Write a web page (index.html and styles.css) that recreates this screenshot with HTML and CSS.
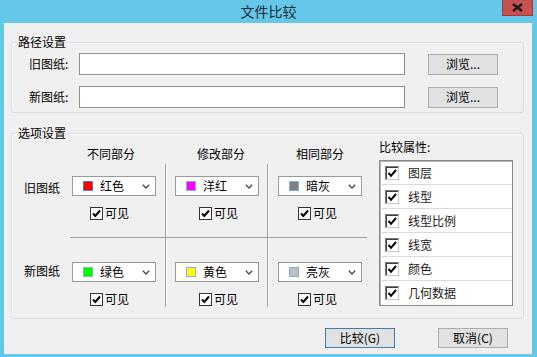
FILE: index.html
```html
<!DOCTYPE html>
<html lang="zh-CN">
<head>
<meta charset="utf-8">
<title>文件比较</title>
<link rel="stylesheet" href="styles.css">
</head>
<body>
<div class="window">
  <div class="titlebar">
    <span class="title">文件比较</span>
    <div class="close">
      <svg width="11" height="9" viewBox="0 0 11 9"><path d="M1 1 L10 8 M10 1 L1 8" stroke="#1a1a1a" stroke-width="2.4" fill="none"/></svg>
    </div>
  </div>
  <div class="client">
    <div class="group group-path">
      <span class="legend">路径设置</span>
      <div class="path-row">
        <span class="path-label">旧图纸:</span>
        <div class="textbox"></div>
        <button class="btn browse">浏览...</button>
      </div>
      <div class="path-row">
        <span class="path-label">新图纸:</span>
        <div class="textbox"></div>
        <button class="btn browse">浏览...</button>
      </div>
    </div>

    <div class="group group-options">
      <span class="legend">选项设置</span>
      <div class="matrix">
        <div class="hcell c0"></div>
        <div class="hcell c1"><span class="htext">不同部分</span></div>
        <div class="hcell c2"><span class="htext">修改部分</span></div>
        <div class="hcell c3"><span class="htext">相同部分</span></div>

        <div class="rlabel r1">旧图纸</div>
        <div class="cell r1 c1">
          <div class="combo"><span class="swatch sw-red"></span><span class="ctext">红色</span><svg class="chev" width="8" height="5" viewBox="0 0 8 5"><path d="M0.8 0.8 L4 4 L7.2 0.8" stroke="#444" stroke-width="1.3" fill="none"/></svg></div>
          <label class="check"><span class="box"><svg width="11" height="11" viewBox="0 0 11 11"><path d="M2 5.5 L4.3 8 L9 2.5" stroke="#000" stroke-width="2" fill="none"/></svg></span><span>可见</span></label>
        </div>
        <div class="cell r1 c2">
          <div class="combo"><span class="swatch sw-magenta"></span><span class="ctext">洋红</span><svg class="chev" width="8" height="5" viewBox="0 0 8 5"><path d="M0.8 0.8 L4 4 L7.2 0.8" stroke="#444" stroke-width="1.3" fill="none"/></svg></div>
          <label class="check"><span class="box"><svg width="11" height="11" viewBox="0 0 11 11"><path d="M2 5.5 L4.3 8 L9 2.5" stroke="#000" stroke-width="2" fill="none"/></svg></span><span>可见</span></label>
        </div>
        <div class="cell r1 c3">
          <div class="combo"><span class="swatch sw-dgray"></span><span class="ctext">暗灰</span><svg class="chev" width="8" height="5" viewBox="0 0 8 5"><path d="M0.8 0.8 L4 4 L7.2 0.8" stroke="#444" stroke-width="1.3" fill="none"/></svg></div>
          <label class="check"><span class="box"><svg width="11" height="11" viewBox="0 0 11 11"><path d="M2 5.5 L4.3 8 L9 2.5" stroke="#000" stroke-width="2" fill="none"/></svg></span><span>可见</span></label>
        </div>

        <div class="rlabel r2">新图纸</div>
        <div class="cell r2 c1">
          <div class="combo"><span class="swatch sw-green"></span><span class="ctext">绿色</span><svg class="chev" width="8" height="5" viewBox="0 0 8 5"><path d="M0.8 0.8 L4 4 L7.2 0.8" stroke="#444" stroke-width="1.3" fill="none"/></svg></div>
          <label class="check"><span class="box"><svg width="11" height="11" viewBox="0 0 11 11"><path d="M2 5.5 L4.3 8 L9 2.5" stroke="#000" stroke-width="2" fill="none"/></svg></span><span>可见</span></label>
        </div>
        <div class="cell r2 c2">
          <div class="combo"><span class="swatch sw-yellow"></span><span class="ctext">黄色</span><svg class="chev" width="8" height="5" viewBox="0 0 8 5"><path d="M0.8 0.8 L4 4 L7.2 0.8" stroke="#444" stroke-width="1.3" fill="none"/></svg></div>
          <label class="check"><span class="box"><svg width="11" height="11" viewBox="0 0 11 11"><path d="M2 5.5 L4.3 8 L9 2.5" stroke="#000" stroke-width="2" fill="none"/></svg></span><span>可见</span></label>
        </div>
        <div class="cell r2 c3">
          <div class="combo"><span class="swatch sw-lgray"></span><span class="ctext">亮灰</span><svg class="chev" width="8" height="5" viewBox="0 0 8 5"><path d="M0.8 0.8 L4 4 L7.2 0.8" stroke="#444" stroke-width="1.3" fill="none"/></svg></div>
          <label class="check"><span class="box"><svg width="11" height="11" viewBox="0 0 11 11"><path d="M2 5.5 L4.3 8 L9 2.5" stroke="#000" stroke-width="2" fill="none"/></svg></span><span>可见</span></label>
        </div>
      </div>

      <div class="attrs">
        <div class="attrs-title">比较属性:</div>
        <div class="listbox">
          <div class="lrow"><span class="lbox"><svg width="12" height="12" viewBox="0 0 12 12"><path d="M2.5 6 L5 8.8 L10 3" stroke="#000" stroke-width="2" fill="none"/></svg></span><span class="ltext">图层</span></div>
          <div class="lrow"><span class="lbox"><svg width="12" height="12" viewBox="0 0 12 12"><path d="M2.5 6 L5 8.8 L10 3" stroke="#000" stroke-width="2" fill="none"/></svg></span><span class="ltext">线型</span></div>
          <div class="lrow"><span class="lbox"><svg width="12" height="12" viewBox="0 0 12 12"><path d="M2.5 6 L5 8.8 L10 3" stroke="#000" stroke-width="2" fill="none"/></svg></span><span class="ltext">线型比例</span></div>
          <div class="lrow"><span class="lbox"><svg width="12" height="12" viewBox="0 0 12 12"><path d="M2.5 6 L5 8.8 L10 3" stroke="#000" stroke-width="2" fill="none"/></svg></span><span class="ltext">线宽</span></div>
          <div class="lrow"><span class="lbox"><svg width="12" height="12" viewBox="0 0 12 12"><path d="M2.5 6 L5 8.8 L10 3" stroke="#000" stroke-width="2" fill="none"/></svg></span><span class="ltext">颜色</span></div>
          <div class="lrow"><span class="lbox"><svg width="12" height="12" viewBox="0 0 12 12"><path d="M2.5 6 L5 8.8 L10 3" stroke="#000" stroke-width="2" fill="none"/></svg></span><span class="ltext">几何数据</span></div>
        </div>
      </div>
    </div>

    <div class="actions">
      <button class="btn action default">比较(G)</button>
      <button class="btn action">取消(C)</button>
    </div>
  </div>
</div>
</body>
</html>
```

FILE: styles.css
```css
* { box-sizing: border-box; }
html, body { margin: 0; padding: 0; }
body {
  font-family: "Noto Sans CJK SC", "Microsoft YaHei", sans-serif;
  font-size: 12px;
  color: #000;
  background: #65C8EA;
}
.window {
  width: 537px;
  height: 357px;
  background: #65C8EA;
  display: flex;
  flex-direction: column;
}
.titlebar {
  height: 23px;
  position: relative;
  display: flex;
  justify-content: center;
  align-items: center;
}
.title {
  font-size: 14px;
  line-height: 23px;
  color: #1c2b33;
}
.close {
  position: absolute;
  top: 0;
  left: 502px;
  width: 31px;
  height: 16px;
  background: #C75050;
  border: 1px solid #A23A3A;
  border-top: none;
  display: flex;
  align-items: center;
  justify-content: center;
}
.client {
  margin: 0 5px 0 4px;
  height: 331px;
  background: #F0F0F0;
  padding: 19px 8px 0 7px;
}
.group {
  position: relative;
  border: 1px solid #DCDCDC;
  border-radius: 3px;
  box-shadow: inset 1px 1px 0 #fff;
}
.legend {
  position: absolute;
  top: -9px;
  left: 5px;
  padding: 0 1px;
  line-height: 16px;
  background: #F0F0F0;
}
.group-path {
  height: 71px;
  padding-top: 10px;
}
.path-row {
  display: flex;
  align-items: center;
  height: 22px;
  padding-left: 17px;
}
.path-row + .path-row { margin-top: 11px; }
.path-label {
  width: 50px;
  line-height: 22px;
}
.textbox {
  width: 326px;
  height: 22px;
  background: #fff;
  border: 1px solid #8F8F8F;
}
.btn {
  font-family: inherit;
  font-size: 12px;
  background: #E1E1E1;
  border: 1px solid #ADADAD;
  padding: 0;
  color: #000;
  line-height: 16px;
}
.browse {
  margin-left: 23px;
  width: 70px;
  height: 21px;
}
.group-options {
  margin-top: 20px;
  height: 186px;
  padding-top: 5px;
  display: flex;
}
.matrix {
  margin-top: 4px;
  display: grid;
  grid-template-columns: 58px 95px 102px 100px;
  grid-template-rows: 21px 74px 69px;
}
.hcell {
  line-height: 21px;
}
.hcell.c2, .hcell.c3 { border-left: 1px solid transparent; }
.c1 .htext { margin-left: 17px; }
.c2 .htext { margin-left: 31px; }
.c3 .htext { margin-left: 28px; }
.rlabel {
  padding-left: 12px;
  line-height: 20px;
}
.rlabel.r1 { padding-top: 14px; }
.rlabel.r2 { padding-top: 23px; }
.cell {
  display: flex;
  flex-direction: column;
  align-items: flex-start;
}
.cell.r1 {
  padding-top: 12px;
  border-bottom: 1px solid #A0A0A0;
}
.cell.r2 { padding-top: 24px; }
.cell.c2, .cell.c3 {
  border-left: 1px solid #A0A0A0;
  box-shadow: inset 1px 0 0 #fff;
}
.combo {
  width: 84px;
  height: 20px;
  background: #fff;
  border: 1px solid #9A9A9A;
  display: flex;
  align-items: center;
  padding-left: 10px;
}
.c1 .combo { margin-left: 2px; }
.c2 .combo { margin-left: 9px; }
.c3 .combo { margin-left: 10px; }
.swatch {
  width: 10px;
  height: 10px;
  border: 1px solid #7DAEE6;
  flex: none;
}
.sw-red { background: #FF0000; border-color: #4A7FD0; }
.sw-magenta { background: #FF00FF; }
.sw-dgray { background: #808080; }
.sw-green { background: #00FF00; }
.sw-yellow { background: #FFFF00; }
.sw-lgray { background: #C0C0C0; }
.ctext {
  margin-left: 7px;
  line-height: 18px;
}
.chev {
  margin-left: auto;
  margin-right: 5px;
}
.check {
  display: flex;
  align-items: center;
  margin-top: 9px;
}
.c1 .check { margin-left: 20px; }
.c2 .check { margin-left: 33px; }
.c3 .check { margin-left: 30px; }
.box {
  width: 13px;
  height: 13px;
  border: 1px solid #333;
  background: #fff;
  display: flex;
  align-items: center;
  justify-content: center;
}
.check span:last-child {
  margin-left: 2px;
  line-height: 16px;
}
.attrs {
  margin-left: 12px;
  display: flex;
  flex-direction: column;
}
.attrs-title {
  line-height: 16px;
}
.listbox {
  margin-top: 5px;
  width: 134px;
  height: 146px;
  background: #fff;
  border: 1px solid #8A8A8A;
  box-shadow: inset 1px 1px 0 #B4B4B4;
}
.lrow {
  height: 24px;
  display: flex;
  align-items: center;
  padding-left: 5px;
  border-bottom: 1px solid #DADADA;
}
.lrow:last-child { border-bottom: none; }
.lbox {
  width: 14px;
  height: 14px;
  background: #fff;
  border: 1px solid;
  border-color: #7A7A7A #C8C8C8 #C8C8C8 #7A7A7A;
  box-shadow: inset 1px 1px 0 #404040;
  display: flex;
  align-items: center;
  justify-content: center;
}
.ltext {
  margin-left: 9px;
  color: #1a1a1a;
  line-height: 16px;
}
.actions {
  display: flex;
  justify-content: flex-end;
  gap: 43px;
  margin-top: 9px;
  padding-right: 16px;
}
.action {
  width: 70px;
  height: 20px;
}
.action.default {
  border-color: #3C7FB1;
}
```
